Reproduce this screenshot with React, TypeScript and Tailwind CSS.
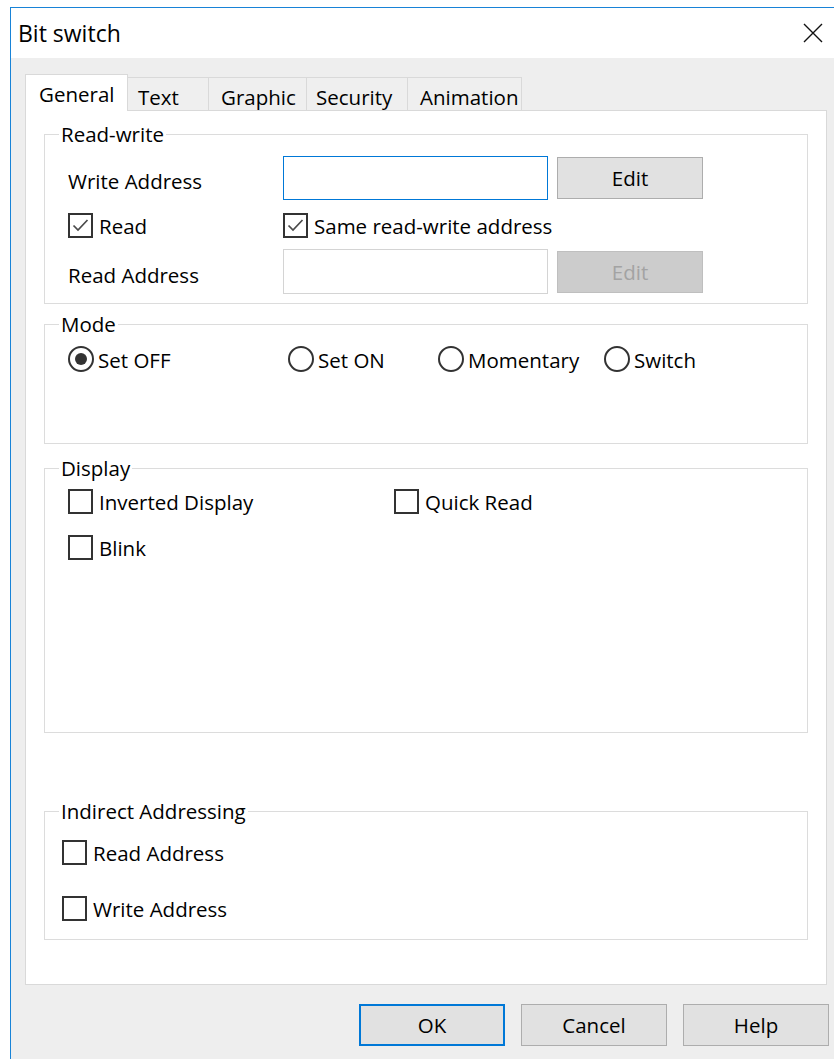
import React from "react";

function CheckBox({ checked = false }: { checked?: boolean }) {
  return (
    <span className="w-[25px] h-[25px] border-2 border-[#333333] bg-white flex items-center justify-center shrink-0">
      {checked && (
        <svg width="19" height="19" viewBox="0 0 19 19">
          <path d="M2.5 9.5 L7 14 L16.5 4" fill="none" stroke="#4a4a4a" strokeWidth="1.7" />
        </svg>
      )}
    </span>
  );
}

function Radio({ on = false }: { on?: boolean }) {
  return (
    <span className="w-[26px] h-[26px] rounded-full border-2 border-[#333333] bg-white flex items-center justify-center shrink-0">
      {on && <span className="w-[12px] h-[12px] rounded-full bg-[#333333]" />}
    </span>
  );
}

function Check({ label, checked, width }: { label: string; checked?: boolean; width?: string }) {
  return (
    <label className={`flex items-center gap-[6px] h-[26px] ${width ?? ""}`}>
      <CheckBox checked={checked} />
      <span className="pt-[1px]">{label}</span>
    </label>
  );
}

function Group({
  title,
  className,
  children,
}: {
  title: string;
  className: string;
  children?: React.ReactNode;
}) {
  return (
    <div className={`relative border border-[#dcdcdc] ${className}`}>
      <span className="absolute left-[14px] top-[-13px] bg-white px-[2px] leading-[24px]">{title}</span>
      {children}
    </div>
  );
}

function Button({
  children,
  disabled,
  primary,
}: {
  children: React.ReactNode;
  disabled?: boolean;
  primary?: boolean;
}) {
  const look = disabled
    ? "bg-[#cccccc] border-[#bfbfbf] text-[#a3a3a3]"
    : primary
      ? "bg-[#e1e1e1] border-2 border-[#0078d7] text-black"
      : "bg-[#e1e1e1] border-[#adadad] text-black";
  return (
    <button className={`w-[146px] h-[42px] border flex items-center justify-center ${look}`}>{children}</button>
  );
}

const tabs = [
  { name: "Text", w: "w-[81px]", pl: "pl-[10px]" },
  { name: "Graphic", w: "w-[98px]", pl: "pl-[12px]" },
  { name: "Security", w: "w-[101px]", pl: "pl-[9px]" },
  { name: "Animation", w: "w-[114px]", pl: "pl-[12px]" },
];

export default function App() {
  return (
    <div className="w-[834px] h-[1059px] bg-white overflow-hidden font-['Open_Sans',sans-serif] text-[20.5px] leading-[24px] text-black">
      <div className="ml-[10px] mt-[7px] border-l border-t border-[#1883d7] h-[1052px] flex flex-col">
        {/* title bar */}
        <div className="h-[50px] bg-white flex items-center justify-between pl-[7px] pr-[11px]">
          <span className="text-[23px] leading-[28px]">Bit switch</span>
          <svg width="20" height="20" viewBox="0 0 20 20">
            <path d="M1 1 L19 19 M19 1 L1 19" stroke="#111111" strokeWidth="1.4" fill="none" />
          </svg>
        </div>

        {/* dialog body */}
        <div className="flex-1 bg-[#eeeeee] pt-[16px] pl-[14px]">
          {/* tab strip */}
          <div className="flex items-end h-[37px] relative z-10">
            <div className="w-[103px] h-[37px] bg-white border border-b-0 border-[#d9d9d9] pl-[13px] pt-[7px]">General</div>
            {tabs.map((t) => (
              <div
                key={t.name}
                className={`${t.w} ${t.pl} h-[33px] border border-l-0 border-b-0 border-[#d9d9d9] bg-[#efefef] pt-[7px] mb-[1px]`}
              >
                {t.name}
              </div>
            ))}
          </div>

          {/* tab page */}
          <div className="w-[802px] h-[875px] -mt-[1px] bg-white border border-[#d9d9d9] pl-[18px]">
            <Group title="Read-write" className="w-[764px] h-[170px] mt-[23px] pl-[23px] pt-[21px]">
              <div className="flex items-center h-[44px]">
                <span className="w-[215px] pt-[6px]">Write Address</span>
                <div className="w-[265px] h-[44px] border border-[#0078d7] bg-white" />
                <div className="ml-[9px]">
                  <Button>Edit</Button>
                </div>
              </div>
              <div className="flex items-center mt-[12px] h-[26px]">
                <Check label="Read" checked width="w-[215px]" />
                <Check label="Same read-write address" checked />
              </div>
              <div className="flex items-center mt-[11px] h-[45px]">
                <span className="w-[215px] pt-[7px]">Read Address</span>
                <div className="w-[265px] h-[45px] border border-[#d4d4d4] bg-white" />
                <div className="ml-[9px]">
                  <Button disabled>Edit</Button>
                </div>
              </div>
            </Group>

            <Group title="Mode" className="w-[764px] h-[120px] mt-[20px] pl-[23px] pt-[21px]">
              <div className="flex items-center h-[26px]">
                <label className="w-[220px] flex items-center gap-[4px]">
                  <Radio on />
                  <span className="pt-[1px]">Set OFF</span>
                </label>
                <label className="w-[150px] flex items-center gap-[4px]">
                  <Radio />
                  <span className="pt-[1px]">Set ON</span>
                </label>
                <label className="w-[166px] flex items-center gap-[4px]">
                  <Radio />
                  <span className="pt-[1px]">Momentary</span>
                </label>
                <label className="flex items-center gap-[4px]">
                  <Radio />
                  <span className="pt-[1px]">Switch</span>
                </label>
              </div>
            </Group>

            <Group title="Display" className="w-[764px] h-[265px] mt-[24px] pl-[23px] pt-[19px]">
              <div className="flex items-center">
                <Check label="Inverted Display" width="w-[326px]" />
                <Check label="Quick Read" />
              </div>
              <div className="mt-[20px]">
                <Check label="Blink" />
              </div>
            </Group>

            <Group title="Indirect Addressing" className="w-[764px] h-[129px] mt-[78px] pl-[17px] pt-[27px]">
              <Check label="Read Address" />
              <div className="mt-[30px]">
                <Check label="Write Address" />
              </div>
            </Group>
          </div>

          {/* dialog buttons */}
          <div className="flex gap-[16px] mt-[19px] pl-[334px]">
            <Button primary>OK</Button>
            <Button>Cancel</Button>
            <Button>Help</Button>
          </div>
        </div>
      </div>
    </div>
  );
}
